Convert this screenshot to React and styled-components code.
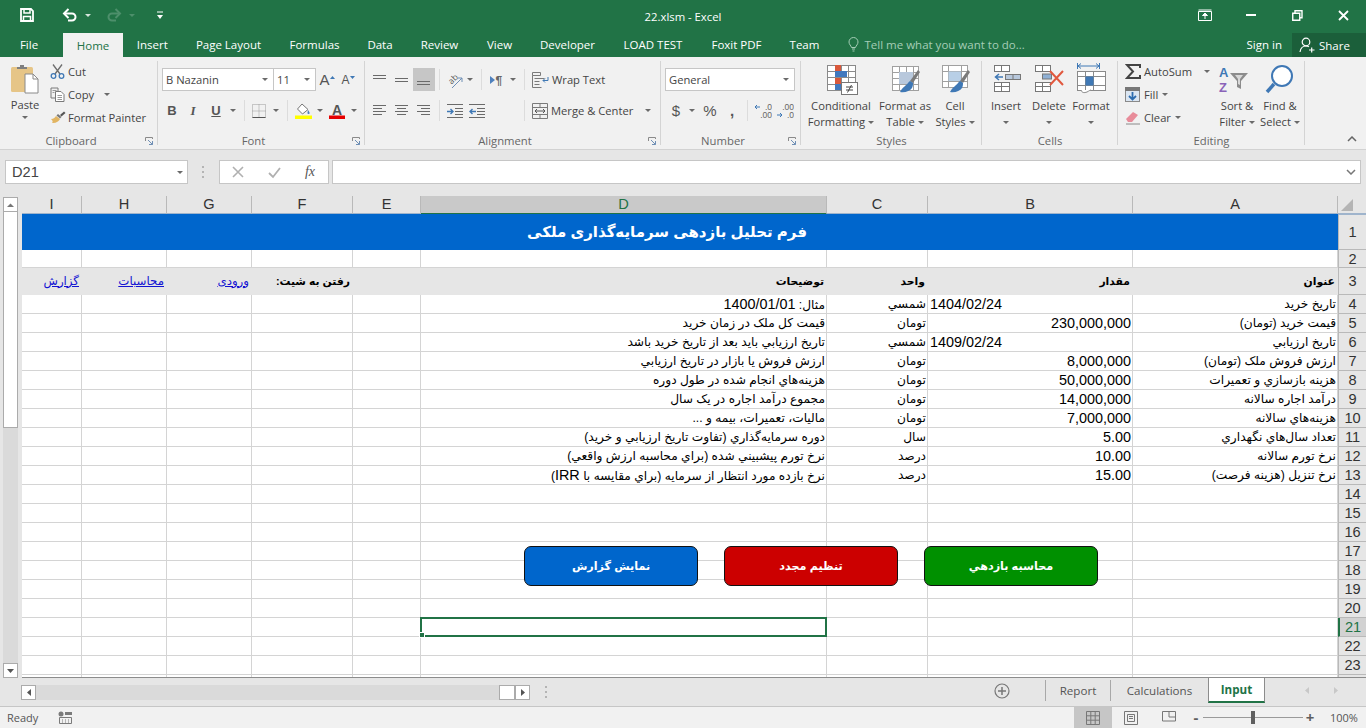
import React from "react";
import styled, { createGlobalStyle } from "styled-components";

const UI_FONT = `"Open Sans", "Noto Sans", sans-serif`;
const CELL_FONT = `"Liberation Sans", "DejaVu Sans", sans-serif`;
const GREEN = "#217346";

const GlobalStyle = createGlobalStyle`
  html, body {
    margin: 0;
    padding: 0;
    overflow: hidden;
    background: #e6e6e6;
    font-family: ${UI_FONT};
  }
`;

const Window = styled.div`
  width: 1366px;
  height: 728px;
  display: flex;
  flex-direction: column;
  overflow: hidden;
  background: #e6e6e6;
`;

/* ---------- title bar ---------- */
const TitleBar = styled.header`
  height: 30px;
  flex: none;
  background: ${GREEN};
  display: grid;
  grid-template-columns: 1fr auto 1fr;
  align-items: center;
`;

const Qat = styled.div`
  display: flex;
  align-items: center;
  padding-left: 17px;
`;

const QatItem = styled.span`
  width: ${(p) => p.$w}px;
  margin-left: ${(p) => p.$ml || 0}px;
  height: 30px;
  display: flex;
  align-items: center;
  justify-content: center;
`;

const TitleText = styled.div`
  color: #fff;
  font-size: 11.3px;
  padding-top: 2px;
  white-space: nowrap;
`;

const WinControls = styled.div`
  display: flex;
  justify-content: flex-end;
`;

const WinButton = styled.span`
  width: 46px;
  height: 30px;
  display: flex;
  align-items: center;
  justify-content: center;
`;

/* ---------- tabs ---------- */
const TabRow = styled.nav`
  height: 27px;
  flex: none;
  background: ${GREEN};
  display: flex;
  align-items: flex-end;
  font-size: 11.5px;
`;

const Tab = styled.span`
  width: ${(p) => p.$w}px;
  margin-right: ${(p) => p.$mr || 0}px;
  height: ${(p) => (p.$active ? 24 : 25)}px;
  display: flex;
  align-items: center;
  justify-content: center;
  box-sizing: border-box;
  color: ${(p) => (p.$active ? GREEN : "#fff")};
  background: ${(p) => (p.$active ? "#f1f1f1" : "transparent")};
  white-space: nowrap;
`;

const TellMe = styled.span`
  height: 25px;
  display: flex;
  align-items: center;
  gap: 6px;
  margin-left: 14px;
  color: #a5cdb6;
  white-space: nowrap;
`;

const SignIn = styled.span`
  height: 25px;
  margin-left: auto;
  display: flex;
  align-items: center;
  color: #fff;
  padding-right: 10px;
`;

const ShareButton = styled.span`
  width: 74px;
  height: 24px;
  background: #1b5f3a;
  color: #fff;
  display: flex;
  align-items: center;
  gap: 4px;
  padding-left: 7px;
  box-sizing: border-box;
`;

/* ---------- ribbon ---------- */
const Ribbon = styled.section`
  height: 93px;
  flex: none;
  box-sizing: border-box;
  background: #f1f1f1;
  border-bottom: 1px solid #d2d2d2;
  padding-top: 3px;
  display: flex;
  color: #444;
  font-size: 11.2px;
  line-height: 16px;
  white-space: nowrap;
`;

const Group = styled.div`
  width: ${(p) => p.$w}px;
  flex: none;
  position: relative;
  display: flex;
  flex-direction: column;
  &::after {
    content: "";
    position: absolute;
    right: 0;
    top: 1px;
    bottom: 4px;
    width: 1px;
    background: #d4d4d4;
  }
`;

const GroupBody = styled.div`
  height: 73px;
  flex: none;
  display: flex;
  padding-left: ${(p) => p.$pl || 0}px;
`;

const GroupLabel = styled.div`
  height: 17px;
  flex: none;
  text-align: center;
  color: #666;
  font-size: 11.3px;
  padding-right: ${(p) => (p.$launcher ? 16 : 0)}px;
  position: relative;
`;

const Launcher = styled.svg`
  position: absolute;
  right: 5px;
  top: 4px;
`;

const Collapse = styled.span`
  margin-left: auto;
  align-self: flex-end;
  padding: 0 9px 7px 0;
  display: flex;
`;

const PasteButton = styled.div`
  width: 34px;
  display: flex;
  flex-direction: column;
  align-items: center;
  padding-top: 4px;
  gap: 3px;
`;

const SmallColumn = styled.div`
  width: ${(p) => (p.$w ? `${p.$w}px` : "auto")};
  margin-left: ${(p) => p.$ml || 0}px;
  display: flex;
  flex-direction: column;
`;

const SmallButton = styled.div`
  height: 23px;
  display: flex;
  align-items: center;
  gap: ${(p) => p.$gap || 3}px;
`;

const StackedRows = styled.div`
  display: flex;
  flex-direction: column;
  gap: 8px;
  padding-top: 8px;
`;

const ToolRow = styled.div`
  height: 23px;
  display: flex;
  align-items: center;
`;

const ToolButton = styled.span`
  width: ${(p) => p.$w}px;
  height: 23px;
  flex: none;
  display: flex;
  align-items: center;
  justify-content: center;
  background: ${(p) => (p.$pressed ? "#c6c6c6" : "transparent")};
`;

const ToolSep = styled.span`
  width: ${(p) => p.$w}px;
  height: 21px;
  flex: none;
  display: flex;
  justify-content: center;
  &::before {
    content: "";
    width: 1px;
    background: #dcdcdc;
  }
`;

const WideButton = styled.span`
  display: flex;
  align-items: center;
  gap: 3px;
  padding-left: 5px;
`;

const Caret = styled.span`
  width: 0;
  height: 0;
  flex: none;
  margin-left: ${(p) => p.$ml || 0}px;
  border-left: 3px solid transparent;
  border-right: 3px solid transparent;
  border-top: 3px solid ${(p) => p.$color || "#6a6a6a"};
`;

const SelectBox = styled.div`
  width: ${(p) => p.$w}px;
  height: 23px;
  flex: none;
  box-sizing: border-box;
  background: #fff;
  border: 1px solid #c6c6c6;
  margin-left: ${(p) => p.$ml || 0}px;
  display: flex;
  align-items: center;
  justify-content: space-between;
  padding: 0 5px 0 3px;
`;

const Glyph = styled.span`
  font-family: ${(p) => p.$font || CELL_FONT};
  font-size: ${(p) => p.$size || 13}px;
  font-weight: ${(p) => p.$weight || 400};
  font-style: ${(p) => (p.$italic ? "italic" : "normal")};
  text-decoration: ${(p) => (p.$under ? "underline" : "none")};
  color: ${(p) => p.$color || "#555"};
`;

const BigButton = styled.div`
  width: ${(p) => p.$w}px;
  flex: none;
  display: flex;
  flex-direction: column;
  align-items: center;
`;

const BigIcon = styled.div`
  height: 38px;
  display: flex;
  justify-content: center;
`;

const BigLine = styled.div`
  height: 16px;
  display: flex;
  align-items: center;
  gap: 3px;
`;

/* ---------- formula bar ---------- */
const FormulaBar = styled.div`
  height: 46px;
  flex: none;
  box-sizing: border-box;
  padding: 10px 5px 0;
  display: flex;
  align-items: flex-start;
  background: #e6e6e6;
`;

const NameBox = styled.div`
  width: 183px;
  height: 24px;
  box-sizing: border-box;
  background: #fff;
  border: 1px solid #c6c6c6;
  display: flex;
  align-items: center;
  justify-content: space-between;
  padding: 0 4px 0 6px;
  font-family: ${CELL_FONT};
  font-size: 14.6px;
  color: #444;
`;

const GripDots = styled.svg`
  margin: ${(p) => p.$margin};
  flex: none;
`;

const FxBox = styled.div`
  width: 110px;
  height: 24px;
  box-sizing: border-box;
  background: #fff;
  border: 1px solid #c6c6c6;
  display: flex;
  align-items: center;
  margin-right: 3px;
`;

const FxSlot = styled.span`
  width: 36px;
  display: flex;
  justify-content: center;
`;

const FormulaInput = styled.div`
  flex: 1;
  height: 24px;
  box-sizing: border-box;
  background: #fff;
  border: 1px solid #c6c6c6;
  display: flex;
  align-items: center;
  justify-content: flex-end;
  padding-right: 4px;
`;

/* ---------- sheet ---------- */
const SheetArea = styled.main`
  height: 482px;
  flex: none;
  display: flex;
  background: #e6e6e6;
`;

const VScroll = styled.div`
  width: 22px;
  flex: none;
  box-sizing: border-box;
  padding: 1px 0 0 3px;
  display: flex;
  flex-direction: column;
  height: 482px;
`;

const VTrack = styled.div`
  width: 15px;
  flex: 1;
  background: #dadada;
  display: flex;
  flex-direction: column;
`;

const VThumb = styled.div`
  height: 216px;
  background: #fff;
  border: 1px solid #ababab;
  border-top: none;
  box-sizing: border-box;
`;

const ScrollBtn = styled.span`
  width: ${(p) => p.$w || 15}px;
  height: 15px;
  flex: none;
  box-sizing: border-box;
  background: #fff;
  border: 1px solid #ababab;
  display: flex;
  align-items: center;
  justify-content: center;
  margin-left: ${(p) => p.$ml || 0}px;
`;

const SheetGrid = styled.div`
  flex: 1;
  position: relative;
  overflow: hidden;
  box-sizing: border-box;
  border-bottom: 1px solid #8c8c8c;
`;

const Row = styled.div`
  display: grid;
  grid-template-columns: 60px 85px 85px 101px 68px 406px 101px 205px 205px 28px;
  height: ${(p) => p.$h}px;
`;

const ColHead = styled.div`
  box-sizing: border-box;
  background: ${(p) => (p.$active ? "#c9c9c9" : "#e6e6e6")};
  color: ${(p) => (p.$active ? GREEN : "#333")};
  border-right: 1px solid #b9b9b9;
  border-bottom: 2px solid ${(p) => (p.$active ? GREEN : "#9fb4cc")};
  font-family: ${CELL_FONT};
  font-size: 14.6px;
  text-align: center;
  line-height: 17px;
`;

const CornerHead = styled.div`
  background: #e6e6e6;
  position: relative;
  box-sizing: border-box;
  border-bottom: 2px solid #9fb4cc;
  display: flex;
  padding: 3px 0 0 3px;
`;

const Cell = styled.div`
  box-sizing: border-box;
  position: relative;
  background: ${(p) => (p.$head ? "#e6e6e6" : "#fff")};
  border-right: ${(p) => (p.$head ? "none" : "1px solid #d4d4d4")};
  border-bottom: ${(p) => (p.$head ? "none" : "1px solid #d4d4d4")};
  display: flex;
  align-items: center;
  justify-content: ${(p) => (p.$start ? "flex-start" : "flex-end")};
  padding: 0 ${(p) => (p.$head ? 3 : 1)}px 0 2px;
  font-family: ${CELL_FONT};
  font-size: ${(p) => (p.$bold ? 10.8 : 12.2)}px;
  font-weight: ${(p) => (p.$bold ? 700 : 400)};
  color: #000;
  white-space: nowrap;
  overflow: visible;
`;

const CellText = styled.span`
  display: block;
`;

const Numeric = styled.span`
  font-family: ${CELL_FONT};
  font-size: 14.4px;
`;

const Selection = styled.span`
  position: absolute;
  left: -1px;
  top: -1px;
  right: -1px;
  bottom: -1px;
  border: 2px solid ${GREEN};
  pointer-events: none;
  z-index: 3;
  &::after {
    content: "";
    position: absolute;
    left: -3px;
    bottom: -3px;
    width: 6px;
    height: 6px;
    background: ${GREEN};
    border: 1px solid #fff;
    box-sizing: border-box;
  }
`;

const SheetLink = styled.a`
  color: #1414d2;
  text-decoration: underline;
  font-size: 11.8px;
  margin-bottom: 2px;
`;

const TitleRow = styled.div`
  height: 36px;
  display: grid;
  grid-template-columns: 1fr 28px;
`;

const TitleCell = styled.div`
  background: #0066cc;
  color: #fff;
  font-family: ${CELL_FONT};
  font-size: 15px;
  font-weight: 700;
  display: flex;
  align-items: center;
  justify-content: center;
  padding-right: 26px;
`;

const RowHead = styled.div`
  box-sizing: border-box;
  background: ${(p) => (p.$active ? "#d2d2d2" : "#e6e6e6")};
  color: ${(p) => (p.$active ? GREEN : "#333")};
  border-left: ${(p) => (p.$active ? `2px solid ${GREEN}` : "1px solid #b9b9b9")};
  border-bottom: 1px solid #b9b9b9;
  font-family: ${CELL_FONT};
  font-size: 14.6px;
  display: flex;
  align-items: center;
  justify-content: center;
`;

const ActionStrip = styled.div`
  position: absolute;
  left: 502px;
  top: 350px;
  display: flex;
  gap: 26px;
  z-index: 2;
`;

const ActionButton = styled.button`
  width: 174px;
  height: 40px;
  border: 1px solid #111;
  border-radius: 7px;
  background: ${(p) => p.$bg};
  color: #fff;
  font-family: ${CELL_FONT};
  font-size: 11.2px;
  font-weight: 700;
  padding: 0;
`;

/* ---------- sheet tabs ---------- */
const SheetBar = styled.div`
  height: 28px;
  flex: none;
  display: flex;
  align-items: flex-start;
  padding-left: 21px;
  background: #e6e6e6;
  font-size: 11.6px;
  color: #555;
`;

const HScroll = styled.div`
  width: 509px;
  height: 15px;
  margin-top: 7px;
  display: flex;
  flex: none;
  background: #dadada;
`;

const HThumb = styled.span`
  width: 16px;
  height: 15px;
  box-sizing: border-box;
  background: #fff;
  border: 1px solid #ababab;
  margin-left: auto;
`;

const SheetTabs = styled.div`
  margin-left: auto;
  height: 25px;
  display: flex;
  align-items: center;
`;

const AddSpacer = styled.span`
  width: 35px;
`;

const SheetTab = styled.span`
  box-sizing: border-box;
  width: ${(p) => p.$w}px;
  display: flex;
  align-items: center;
  justify-content: center;
  background: ${(p) => (p.$active ? "#fff" : "transparent")};
  color: ${(p) => (p.$active ? GREEN : "#555")};
  font-weight: ${(p) => (p.$active ? 700 : 400)};
  border-bottom: ${(p) => (p.$active ? `2px solid ${GREEN}` : "none")};
  border-left: ${(p) => (p.$active ? "1px solid #8c8c8c" : "none")};
  border-right: ${(p) => (p.$active ? "1px solid #8c8c8c" : "none")};
  margin-top: ${(p) => (p.$active ? -1 : 0)}px;
  height: ${(p) => (p.$active ? 26 : 25)}px;
`;

const TabDivider = styled.span`
  width: 1px;
  height: 21px;
  background: #a8a8a8;
`;

const TabNav = styled.div`
  width: 101px;
  height: 25px;
  display: flex;
  align-items: center;
  padding-left: 40px;
  gap: 25px;
  box-sizing: border-box;
`;

/* ---------- status bar ---------- */
const StatusBar = styled.footer`
  height: 22px;
  flex: none;
  box-sizing: border-box;
  background: #f1f1f1;
  border-top: 1px solid #c6c6c6;
  display: flex;
  align-items: center;
  font-size: 11px;
  color: #555;
  padding-left: 7px;
`;

const MacroSlot = styled.span`
  margin-left: 20px;
  display: flex;
`;

const ViewGroup = styled.div`
  margin-left: auto;
  display: flex;
  align-items: center;
  height: 21px;
  flex: none;
`;

const ViewButton = styled.span`
  width: 38px;
  height: 21px;
  flex: none;
  display: flex;
  align-items: center;
  justify-content: center;
  background: ${(p) => (p.$active ? "#c6c6c6" : "transparent")};
`;

const ZoomSlider = styled.span`
  width: 100px;
  height: 1px;
  flex: none;
  background: #9a9a9a;
  margin: 0 3px;
  position: relative;
  &::after {
    content: "";
    position: absolute;
    left: 48px;
    top: -6px;
    width: 4px;
    height: 13px;
    background: #5f5f5f;
  }
`;

const ZoomValue = styled.span`
  width: 36px;
  flex: none;
  padding-left: 16px;
`;

const ZoomSign = styled.span`
  width: 8px;
  flex: none;
  margin-left: ${(p) => p.$ml || 0}px;
  display: flex;
  justify-content: center;
  font-size: 15px;
  font-weight: 700;
  line-height: 15px;
  color: #5f5f5f;
`;

/* ---------- icons ---------- */
const Svg = ({ w, h = w, children, ...rest }) => (
  <svg width={w} height={h} viewBox={`0 0 ${w} ${h}`} fill="none" {...rest} style={{ display: "block", flex: "none" }}>
    {children}
  </svg>
);

const SaveIcon = () => (
  <Svg w={14}>
    <path d="M1 1h10l2 2v10H1z" stroke="#fff" strokeWidth="1.8" />
    <path d="M4 1.5v3.5h6V1.5M3.5 13V8.5h7V13" stroke="#fff" strokeWidth="1.5" />
  </Svg>
);

const UndoIcon = ({ color = "#fff", flip }) => (
  <Svg w={16} h={14}>
    <g transform={flip ? "translate(16 0) scale(-1 1)" : undefined}>
      <path d="M2.5 5.5h7.5a3.5 3.5 0 0 1 0 7H6" stroke={color} strokeWidth="2" />
      <path d="M6.5 1 2 5.5 6.5 10" stroke={color} strokeWidth="2" />
    </g>
  </Svg>
);

const CustomizeIcon = () => (
  <Svg w={8} h={9}>
    <path d="M1 1h6" stroke="#fff" />
    <path d="M1 4h6L4 8z" fill="#fff" />
  </Svg>
);

const RibbonDisplayIcon = () => (
  <Svg w={14} h={12}>
    <path d="M.5 2.5h13v9H.5zM.5 1h13" stroke="#fff" />
    <path d="M7 10V5M4.5 6.5 7 4l2.5 2.5z" stroke="#fff" fill="#fff" />
  </Svg>
);

const RestoreIcon = () => (
  <Svg w={11}>
    <path d="M.75 3.25h7v7h-7zM3 3V.75h7v7H8" stroke="#fff" strokeWidth="1.4" />
  </Svg>
);

const BulbIcon = () => (
  <Svg w={11} h={15}>
    <path d="M3.5 10.5C3 8.5 1 7.500 1 5a4.500 4.500 0 0 1 9 0c0 2.500-2 3.500-2.500 5.500z" stroke="#a5cdb6" />
    <path d="M4 12h3M4.500 14h2" stroke="#a5cdb6" />
  </Svg>
);

const PersonIcon = () => (
  <Svg w={16}>
    <circle cx="7" cy="5" r="3.8" stroke="#fff" strokeWidth="1.2" />
    <path d="M1 15c.5-3.500 2.500-6 6-6 1 0 2 .3 3 .8M10 13h5.500M12.700 10.500v5" stroke="#fff" strokeWidth="1.2" />
  </Svg>
);

const PasteIcon = () => (
  <Svg w={30} h={30}>
    <rect x="1" y="3" width="22" height="25" rx="1.500" fill="#e6c587" />
    <path d="M7 5V3h3V1h4v2h3v2z" fill="#7f7f7f" />
    <path d="M15 10h8l5 5v14H15z" fill="#fff" stroke="#8a8a8a" />
    <path d="M23 10v5h5" stroke="#8a8a8a" />
  </Svg>
);

const CutIcon = () => (
  <Svg w={15}>
    <path d="M3 .5 10 10M12 .5 5 10" stroke="#6e6e6e" strokeWidth="1.300" />
    <circle cx="3.500" cy="12" r="2.300" stroke="#3f78b5" strokeWidth="1.300" />
    <circle cx="11.500" cy="12" r="2.300" stroke="#3f78b5" strokeWidth="1.300" />
  </Svg>
);

const CopyIcon = () => (
  <Svg w={15}>
    <path d="M1 1h7v3M1 1v10h4" stroke="#7a7a7a" />
    <path d="M5.500 4.500H11l3 3v7H5.500z" fill="#fff" stroke="#7a7a7a" />
    <path d="M7.500 8.500h4.500M7.500 10.500h4.500M7.500 12.500h4.500M2.500 3.500h4M2.500 5.500h2" stroke="#9a9a9a" />
  </Svg>
);

const PainterIcon = () => (
  <Svg w={16} h={13}>
    <path d="M1 8c3 0 4-2 5-3l4 3c-1 2-4 4.500-8 4 1-1 1-2-1-4z" fill="#e2b562" />
    <path d="m6.500 4.500 3.500 3 1.500-1.500-3.500-3z" fill="#777" />
    <path d="M10 4 14 .5l1.500 1.500-4 3.500z" fill="#555" />
  </Svg>
);

const Launch = () => (
  <Launcher width="8" height="8" viewBox="0 0 8 8" fill="none">
    <path d="M.5 4V.5H7.500V2" stroke="#8a8a8a" />
    <path d="M3 3 7.500 7.500M4 7.500h3.500V4" stroke="#6f8fb5" />
  </Launcher>
);

const BordersIcon = () => (
  <Svg w={14}>
    <path d="M.5.5h13v13H.5zM7 .5v13M.5 7h13" stroke="#9a9a9a" strokeDasharray="1 1" />
    <path d="M.5 13.500h13" stroke="#555" />
  </Svg>
);

const FillIcon = () => (
  <Svg w={17} h={16}>
    <path d="M7 1 2.500 6l5 5L13 6.500z" fill="#fff" stroke="#777" />
    <path d="M13 7c1 1.500 2 2.500 1.500 3.500s-2.500.5-2-1z" fill="#4f81bd" />
    <rect x="0" y="12.500" width="17" height="3.500" fill="#ffff00" />
  </Svg>
);

const FontColorIcon = () => (
  <Svg w={16}>
    <text x="8" y="11.500" textAnchor="middle" fontFamily={CELL_FONT} fontWeight="700" fontSize="14" fill="#555">A</text>
    <rect x="0" y="12.500" width="16" height="3.500" fill="#e60000" />
  </Svg>
);

const Lines = ({ rows, w = 14, h = 14, color = "#6a6a6a" }) => (
  <Svg w={w} h={h}>
    {rows.map(([a, b, y], i) => (
      <path key={i} d={`M${a} ${y + 0.5}H${b}`} stroke={color} />
    ))}
  </Svg>
);

const OrientationIcon = () => (
  <Svg w={22} h={22}>
    <text x="9" y="13" textAnchor="middle" transform="rotate(-45 9 10)" fontFamily={UI_FONT} fontSize="8.500" fill="#555">ab</text>
    <path d="M8 19 18 9" stroke="#6f8fb5" />
    <path d="M14 9h4v4" stroke="#6f8fb5" />
  </Svg>
);

const RtlIcon = () => (
  <Svg w={15} h={12}>
    <path d="M0 2l5 4-5 4z" fill="#4f81bd" />
    <text x="5.500" y="10.500" fontFamily={CELL_FONT} fontSize="12" fontWeight="700" fill="#666">¶</text>
  </Svg>
);

const IndentIcon = ({ out }) => (
  <Svg w={16} h={14}>
    <path d="M0 .5h16M8 4.500h8M8 7.500h8M8 10.500h8M0 13.500h16" stroke="#6a6a6a" />
    <path d={out ? "M7 7.500H1M3.500 5 1 7.500 3.500 10" : "M0 7.500h6M3.500 5 6 7.500 3.500 10"} stroke="#3f78b5" strokeWidth="1.400" />
  </Svg>
);

const WrapIcon = () => (
  <Svg w={17} h={16}>
    <path d="M.5.5h8v3h-8zM.5 3.500v12h9" stroke="#7a7a7a" />
    <path d="M2.500 6.500h10M2.500 9.500h5M2.500 12.500h5" stroke="#7a7a7a" />
    <path d="M16 5v3.500h-5M13 6.500 11 8.500l2 2" stroke="#3f78b5" />
  </Svg>
);

const MergeIcon = () => (
  <Svg w={16}>
    <path d="M.5.5h15v15H.5zM.5 4.500h15M.5 11.500h15M8 .5v4M8 11.500v4" stroke="#7a7a7a" />
    <path d="M3 8h10M5 6 3 8l2 2M11 6l2 2-2 2" stroke="#555" />
  </Svg>
);

const DecimalIcon = ({ more }) => (
  <Svg w={18} h={16}>
    <text x="18" y="7" textAnchor="end" fontFamily={CELL_FONT} fontSize="8.500" fill="#666">{more ? ".00" : ".0"}</text>
    <text x="18" y="15" textAnchor="end" fontFamily={CELL_FONT} fontSize="8.500" fill="#666">{more ? ".0" : ".00"}</text>
    {more
      ? <path d="M1 12h5M4 10l2 2-2 2" stroke="#3f78b5" />
      : <path d="M1 4h5M3 2l-2 2 2 2" stroke="#3f78b5" />}
  </Svg>
);

const Grid = ({ x, y, w, h, cols = [], rows = [], stroke = "#8a8a8a", fill = "#fff" }) => (
  <g stroke={stroke}>
    <rect x={x + 0.5} y={y + 0.5} width={w} height={h} fill={fill} />
    {cols.map((c) => <path key={`c${c}`} d={`M${x + c + 0.5} ${y}v${h}`} />)}
    {rows.map((r) => <path key={`r${r}`} d={`M${x} ${y + r + 0.5}h${w}`} />)}
  </g>
);

const Brush = ({ x = 0, y = 0 }) => (
  <g transform={`translate(${x} ${y})`}>
    <path d="M33 8 25 19l3 2 7-11z" fill="#7a7a7a" />
    <path d="M25 19c-2 1-2 3-4 4-2 2-4 3-6 7 5 1 10-1 12-4 1-2 1-4 1-5z" fill="#3f78b5" />
  </g>
);

const ConditionalIcon = () => (
  <Svg w={40} h={38}>
    <Grid x={6} y={5} w={28} h={25} cols={[8, 14, 21]} rows={[6, 12, 19]} />
    <rect x="14" y="5" width="6" height="6" fill="#d9583b" />
    <rect x="14" y="11" width="12" height="6" fill="#4178be" />
    <rect x="14" y="18" width="6" height="6" fill="#d9583b" />
    <rect x="14" y="24" width="6" height="6" fill="#4178be" />
    <rect x="20.500" y="22.500" width="16" height="12" fill="#fff" stroke="#777" />
    <path d="M25 27h7M25 30h7M30.500 25l-4 7.500" stroke="#444" />
  </Svg>
);

const FormatTableIcon = () => (
  <Svg w={40} h={38}>
    <Grid x={7} y={6} w={26} h={24} cols={[7, 14, 21]} rows={[6, 12, 18]} stroke="#a0a0a0" />
    <rect x="14" y="12" width="14" height="12" fill="#b8c8dc" />
    <Brush x={0} y={2} />
  </Svg>
);

const CellStylesIcon = () => (
  <Svg w={40} h={38}>
    <Grid x={7} y={5} w={25} h={22} cols={[6, 19]} rows={[6, 16]} stroke="#a0a0a0" />
    <rect x="13.500" y="11.500" width="12.500" height="9.500" fill="#b8cfe6" />
    <Brush x={0} y={2} />
  </Svg>
);

const InsertIcon = () => (
  <Svg w={40} h={38}>
    <Grid x={8} y={5} w={15} h={6} cols={[7]} stroke="#777" />
    <Grid x={8} y={22} w={15} h={9} cols={[7]} rows={[4]} stroke="#777" />
    <rect x="19.500" y="14.500" width="15" height="5" fill="#b8c8dc" stroke="#777" />
    <path d="M27 14.500v5" stroke="#777" />
    <path d="M17 17H10M13 14l-3.500 3 3.500 3" stroke="#3f78b5" strokeWidth="1.500" />
  </Svg>
);

const DeleteIcon = () => (
  <Svg w={40} h={38}>
    <Grid x={6} y={5} w={15} h={6} cols={[7]} stroke="#777" />
    <Grid x={6} y={22} w={15} h={9} cols={[7]} rows={[4]} stroke="#777" />
    <rect x="13.500" y="14" width="9" height="5" fill="#8fb0d5" stroke="#777" />
    <path d="M21 11 34 25M34 11 21 25" stroke="#e1583e" strokeWidth="2" />
  </Svg>
);

const FormatIcon = () => (
  <Svg w={40} h={38}>
    <path d="M6.500 3v6M28.500 3v6M7 6h21M10 3.500 7 6l3 2.500M25 3.500 28 6l-3 2.500" stroke="#3f78b5" />
    <Grid x={6} y={11} w={28} h={19} cols={[8, 16]} rows={[5, 14]} stroke="#8a8a8a" />
    <rect x="14.500" y="16.500" width="8" height="9" fill="#3f78b5" />
    <path d="M10 30c1 3 3 3 6 2 2-1 3-2 4-2" stroke="#8a8a8a" fill="#fff" />
  </Svg>
);

const SumIcon = () => (
  <Svg w={16} h={15}>
    <path d="M15 4V1H2l6 6.500L2 14h13v-3" stroke="#444" strokeWidth="2" />
  </Svg>
);

const FillDownIcon = () => (
  <Svg w={15}>
    <rect x=".5" y=".5" width="14" height="14" fill="#dbe6f2" stroke="#8a8a8a" />
    <rect x="0" y="0" width="15" height="4" fill="#777" />
    <path d="M7.500 5v7M4 9l3.500 3.500L11 9" stroke="#2d6cae" strokeWidth="1.800" />
  </Svg>
);

const ClearIcon = () => (
  <Svg w={15} h={14}>
    <path d="M1 8 8 1l5 3-6 7H3z" fill="#e88c9a" />
    <path d="M1 13h14" stroke="#8a8a8a" />
  </Svg>
);

const SortIcon = () => (
  <Svg w={40} h={38}>
    <text x="2" y="17" fontFamily={CELL_FONT} fontSize="13" fontWeight="700" fill="#3f78b5">A</text>
    <text x="2" y="32" fontFamily={CELL_FONT} fontSize="13" fontWeight="700" fill="#8a63b8">Z</text>
    <path d="M13 13h18l-7 8v8l-4-2v-6z" fill="#8c8c8c" />
    <path d="M18 15h8l-3 4v6l-2-1v-5z" fill="#d8d8d8" />
  </Svg>
);

const FindIcon = () => (
  <Svg w={40} h={38}>
    <circle cx="22" cy="16" r="10" stroke="#3f78b5" strokeWidth="2" fill="#fff" />
    <path d="M14 24 7 32" stroke="#3f78b5" strokeWidth="3.500" />
  </Svg>
);

const Chevron = ({ up, color = "#666" }) => (
  <Svg w={10} h={6}>
    <path d={up ? "M1 5l4-4 4 4" : "M1 1l4 4 4-4"} stroke={color} strokeWidth="1.500" />
  </Svg>
);

const Dots = ({ margin, h = 16 }) => (
  <GripDots $margin={margin} width="2" height={h} viewBox={`0 0 2 ${h}`}>
    <rect y={h / 2 - 6} width="2" height="2" fill="#b4b4b4" />
    <rect y={h / 2 - 1} width="2" height="2" fill="#b4b4b4" />
    <rect y={h / 2 + 4} width="2" height="2" fill="#b4b4b4" />
  </GripDots>
);

const Arrow = ({ dir, color = "#555" }) => {
  const d = { up: "M0 4l3.500-3.500L7 4z", down: "M0 0h7L3.500 4z", left: "M4 0v7L0 3.500z", right: "M0 0v7l4-3.500z" }[dir];
  const vert = dir === "up" || dir === "down";
  return (
    <Svg w={vert ? 7 : 4} h={vert ? 4 : 7}>
      <path d={d} fill={color} />
    </Svg>
  );
};

const AddSheetIcon = () => (
  <Svg w={16}>
    <circle cx="8" cy="8" r="7" stroke="#777" strokeWidth="1.200" />
    <path d="M8 4v8M4 8h8" stroke="#777" strokeWidth="1.500" />
  </Svg>
);

const MacroIcon = () => (
  <Svg w={14} h={13}>
    <circle cx="3" cy="3" r="2.500" fill="#7a7a7a" />
    <path d="M7 1h7v3H7z" fill="#7a7a7a" />
    <path d="M1.500 6.500h12v6h-12zM4 9h1M7 9h1M10 9h1M4 11h1M7 11h1M10 11h1" stroke="#7a7a7a" />
  </Svg>
);

const NormalViewIcon = () => (
  <Svg w={14}>
    <path d="M.5.5h13v13H.5zM4.800.5v13M9.200.5v13M.5 4.800h13M.5 9.200h13" stroke="#777" />
  </Svg>
);

const PageViewIcon = () => (
  <Svg w={14}>
    <path d="M.5.5h13v13H.5zM3.500 3.500h7v7h-7zM5 5.500h4M5 7.500h4" stroke="#777" />
  </Svg>
);

const BreakViewIcon = () => (
  <Svg w={14}>
    <path d="M.5 10V.5h13V10M.5 10h13M7 .5V6H13.500" stroke="#777" />
  </Svg>
);

/* ---------- data ---------- */
const TABS = [
  ["Insert", 58.5], ["Page Layout", 94], ["Formulas", 78], ["Data", 53], ["Review", 66],
  ["View", 54], ["Developer", 82], ["LOAD TEST", 89], ["Foxit PDF", 78], ["Team", 58],
];

const COLUMNS = ["I", "H", "G", "F", "E", "D", "C", "B", "A"];

const ROWS = [
  { n: 4, a: "تاریخ خرید", date: "1404/02/24", c: "شمسي", d: <>مثال: <Numeric>1400/01/01</Numeric></> },
  { n: 5, a: "قیمت خرید (تومان)", b: "230,000,000", c: "تومان", d: "قیمت کل ملک در زمان خرید" },
  { n: 6, a: "تاریخ ارزیابي", date: "1409/02/24", c: "شمسي", d: "تاریخ ارزیابي باید بعد از تاریخ خرید باشد" },
  { n: 7, a: "ارزش فروش ملک (تومان)", b: "8,000,000", c: "تومان", d: "ارزش فروش یا بازار در تاریخ ارزیابي" },
  { n: 8, a: "هزینه بازسازي و تعمیرات", b: "50,000,000", c: "تومان", d: "هزینه‌هاي انجام شده در طول دوره" },
  { n: 9, a: "درآمد اجاره سالانه", b: "14,000,000", c: "تومان", d: "مجموع درآمد اجاره در یک سال" },
  { n: 10, a: "هزینه‌هاي سالانه", b: "7,000,000", c: "تومان", d: "مالیات، تعمیرات، بیمه و ..." },
  { n: 11, a: "تعداد سال‌هاي نگهداري", b: "5.00", c: "سال", d: "دوره سرمایه‌گذاري (تفاوت تاریخ ارزیابي و خرید)" },
  { n: 12, a: "نرخ تورم سالانه", b: "10.00", c: "درصد", d: "نرخ تورم پیشبیني شده (براي محاسبه ارزش واقعي)" },
  { n: 13, a: "نرخ تنزیل (هزینه فرصت)", b: "15.00", c: "درصد", d: <>نرخ بازده مورد انتظار از سرمایه (براي مقایسه با <Numeric>IRR</Numeric>)</> },
];

const BlankRow = ({ n, h = 19, selected }) => (
  <Row $h={h}>
    {COLUMNS.map((col) => (
      <Cell key={col}>{selected && col === "D" && <Selection />}</Cell>
    ))}
    <RowHead $active={selected}>{n}</RowHead>
  </Row>
);

const DataRow = ({ row }) => (
  <Row $h={19}>
    <Cell /><Cell /><Cell /><Cell /><Cell />
    <Cell><CellText dir="rtl">{row.d}</CellText></Cell>
    <Cell><CellText dir="rtl">{row.c}</CellText></Cell>
    <Cell $start={!!row.date}><Numeric>{row.date || row.b}</Numeric></Cell>
    <Cell><CellText dir="rtl">{row.a}</CellText></Cell>
    <RowHead>{row.n}</RowHead>
  </Row>
);

const AlignTop = [[0, 13, 2], [0, 13, 5]];
const AlignMid = [[0, 13, 5], [0, 13, 8]];
const AlignBot = [[0, 13, 8], [0, 13, 11]];
const AlignL = [[0, 13, 1], [0, 9, 4], [0, 13, 7], [0, 9, 10]];
const AlignC = [[0, 13, 1], [2, 11, 4], [0, 13, 7], [2, 11, 10]];
const AlignR = [[0, 13, 1], [4, 13, 4], [0, 13, 7], [4, 13, 10]];

export default function App() {
  return (
    <Window>
      <GlobalStyle />

      <TitleBar>
        <Qat>
          <QatItem $w={20}><SaveIcon /></QatItem>
          <QatItem $w={18} $ml={24}><UndoIcon /></QatItem>
          <QatItem $w={18}><Caret $color="#d5e5db" /></QatItem>
          <QatItem $w={18} $ml={8}><UndoIcon flip color="#4d8f6b" /></QatItem>
          <QatItem $w={18}><Caret $color="#4d8f6b" /></QatItem>
          <QatItem $w={18} $ml={10}><CustomizeIcon /></QatItem>
        </Qat>
        <TitleText>22.xlsm - Excel</TitleText>
        <WinControls>
          <WinButton><RibbonDisplayIcon /></WinButton>
          <WinButton><Svg w={10} h={2}><rect width="10" height="2" fill="#fff" /></Svg></WinButton>
          <WinButton><RestoreIcon /></WinButton>
          <WinButton><Svg w={11}><path d="M1 1l9 9M10 1l-9 9" stroke="#fff" strokeWidth="1.800" /></Svg></WinButton>
        </WinControls>
      </TitleBar>

      <TabRow>
        <Tab $w={58} $mr={5}>File</Tab>
        <Tab $w={60} $active>Home</Tab>
        {TABS.map(([label, w]) => <Tab key={label} $w={w}>{label}</Tab>)}
        <TellMe><BulbIcon />Tell me what you want to do...</TellMe>
        <SignIn>Sign in</SignIn>
        <ShareButton><PersonIcon />Share</ShareButton>
      </TabRow>

      <Ribbon>
        <Group $w={158}>
          <GroupBody $pl={8}>
            <PasteButton>
              <PasteIcon />
              <BigLine>Paste</BigLine>
              <Caret />
            </PasteButton>
            <SmallColumn $ml={8}>
              <SmallButton><CutIcon />Cut</SmallButton>
              <SmallButton><CopyIcon />Copy<Caret $ml={7} /></SmallButton>
              <SmallButton $gap={2}><PainterIcon />Format Painter</SmallButton>
            </SmallColumn>
          </GroupBody>
          <GroupLabel $launcher>Clipboard<Launch /></GroupLabel>
        </Group>

        <Group $w={207}>
          <GroupBody $pl={4}>
            <StackedRows>
              <ToolRow>
                <SelectBox $w={112}>B Nazanin<Caret /></SelectBox>
                <SelectBox $w={43} $ml={-1}>11<Caret /></SelectBox>
                <ToolButton $w={22}><Glyph $size={15}>A</Glyph><Svg w={5} h={10}><path d="M0 4l2.500-3L5 4z" fill="#3f78b5" /></Svg></ToolButton>
                <ToolButton $w={20}><Glyph $size={12}>A</Glyph><Svg w={5} h={10}><path d="M0 1h5L2.500 4z" fill="#3f78b5" /></Svg></ToolButton>
              </ToolRow>
              <ToolRow>
                <ToolButton $w={20}><Glyph $weight={700}>B</Glyph></ToolButton>
                <ToolButton $w={22}><Glyph $italic $weight={700} $font={`"Liberation Serif", serif`}>I</Glyph></ToolButton>
                <ToolButton $w={24}><Glyph $weight={700} $under>U</Glyph></ToolButton>
                <ToolButton $w={10}><Caret /></ToolButton>
                <ToolSep $w={12} />
                <ToolButton $w={18}><BordersIcon /></ToolButton>
                <ToolButton $w={16}><Caret /></ToolButton>
                <ToolSep $w={6} />
                <ToolButton $w={26}><FillIcon /></ToolButton>
                <ToolButton $w={8}><Caret /></ToolButton>
                <ToolButton $w={26}><FontColorIcon /></ToolButton>
                <ToolButton $w={8}><Caret /></ToolButton>
              </ToolRow>
            </StackedRows>
          </GroupBody>
          <GroupLabel $launcher>Font<Launch /></GroupLabel>
        </Group>

        <Group $w={296}>
          <GroupBody $pl={4}>
            <StackedRows>
              <ToolRow>
                <ToolButton $w={22}><Lines rows={AlignTop} /></ToolButton>
                <ToolButton $w={22}><Lines rows={AlignMid} /></ToolButton>
                <ToolButton $w={22} $pressed><Lines rows={AlignBot} /></ToolButton>
                <ToolSep $w={8} />
                <ToolButton $w={24}><OrientationIcon /></ToolButton>
                <ToolButton $w={6}><Caret /></ToolButton>
                <ToolSep $w={16} />
                <ToolButton $w={16}><RtlIcon /></ToolButton>
                <ToolButton $w={16}><Caret /></ToolButton>
                <ToolSep $w={6} />
                <WideButton><WrapIcon />Wrap Text</WideButton>
              </ToolRow>
              <ToolRow>
                <ToolButton $w={22}><Lines rows={AlignL} /></ToolButton>
                <ToolButton $w={22}><Lines rows={AlignC} /></ToolButton>
                <ToolButton $w={22}><Lines rows={AlignR} /></ToolButton>
                <ToolSep $w={8} />
                <ToolButton $w={23}><IndentIcon /></ToolButton>
                <ToolButton $w={22}><IndentIcon out /></ToolButton>
                <ToolButton $w={33} />
                <ToolSep $w={6} />
                <WideButton><MergeIcon />Merge &amp; Center<Caret $ml={9} /></WideButton>
              </ToolRow>
            </StackedRows>
          </GroupBody>
          <GroupLabel $launcher>Alignment<Launch /></GroupLabel>
        </Group>

        <Group $w={140}>
          <GroupBody $pl={4}>
            <StackedRows>
              <ToolRow>
                <SelectBox $w={130}>General<Caret /></SelectBox>
              </ToolRow>
              <ToolRow>
                <ToolButton $w={22}><Glyph $size={15}>$</Glyph></ToolButton>
                <ToolButton $w={10}><Caret /></ToolButton>
                <ToolButton $w={26}><Glyph $size={15}>%</Glyph></ToolButton>
                <ToolButton $w={18}><Glyph $size={15} $weight={700}>,</Glyph></ToolButton>
                <ToolSep $w={12} />
                <ToolButton $w={20}><DecimalIcon /></ToolButton>
                <ToolButton $w={24}><DecimalIcon more /></ToolButton>
              </ToolRow>
            </StackedRows>
          </GroupBody>
          <GroupLabel $launcher>Number<Launch /></GroupLabel>
        </Group>

        <Group $w={181}>
          <GroupBody $pl={6}>
            <BigButton $w={68}>
              <BigIcon><ConditionalIcon /></BigIcon>
              <BigLine>Conditional</BigLine>
              <BigLine>Formatting<Caret /></BigLine>
            </BigButton>
            <BigButton $w={60}>
              <BigIcon><FormatTableIcon /></BigIcon>
              <BigLine>Format as</BigLine>
              <BigLine>Table<Caret /></BigLine>
            </BigButton>
            <BigButton $w={40}>
              <BigIcon><CellStylesIcon /></BigIcon>
              <BigLine>Cell</BigLine>
              <BigLine>Styles<Caret /></BigLine>
            </BigButton>
          </GroupBody>
          <GroupLabel>Styles</GroupLabel>
        </Group>

        <Group $w={136}>
          <GroupBody $pl={3}>
            <BigButton $w={42}>
              <BigIcon><InsertIcon /></BigIcon>
              <BigLine>Insert</BigLine>
              <BigLine><Caret /></BigLine>
            </BigButton>
            <BigButton $w={44}>
              <BigIcon><DeleteIcon /></BigIcon>
              <BigLine>Delete</BigLine>
              <BigLine><Caret /></BigLine>
            </BigButton>
            <BigButton $w={40}>
              <BigIcon><FormatIcon /></BigIcon>
              <BigLine>Format</BigLine>
              <BigLine><Caret /></BigLine>
            </BigButton>
          </GroupBody>
          <GroupLabel>Cells</GroupLabel>
        </Group>

        <Group $w={187}>
          <GroupBody $pl={7}>
            <SmallColumn $w={90}>
              <SmallButton><SumIcon />AutoSum<Caret $ml={9} /></SmallButton>
              <SmallButton $gap={4}><FillDownIcon />Fill<Caret /></SmallButton>
              <SmallButton $gap={4}><ClearIcon />Clear<Caret /></SmallButton>
            </SmallColumn>
            <BigButton $w={44}>
              <BigIcon><SortIcon /></BigIcon>
              <BigLine>Sort &amp;</BigLine>
              <BigLine>Filter<Caret /></BigLine>
            </BigButton>
            <BigButton $w={42}>
              <BigIcon><FindIcon /></BigIcon>
              <BigLine>Find &amp;</BigLine>
              <BigLine>Select<Caret /></BigLine>
            </BigButton>
          </GroupBody>
          <GroupLabel>Editing</GroupLabel>
        </Group>

        <Collapse><Chevron up /></Collapse>
      </Ribbon>

      <FormulaBar>
        <NameBox>D21<Caret /></NameBox>
        <Dots margin="4px 15px 0 14px" />
        <FxBox>
          <FxSlot><Svg w={12}><path d="M1 1l10 10M11 1 1 11" stroke="#b0b0b0" strokeWidth="1.600" /></Svg></FxSlot>
          <FxSlot><Svg w={13}><path d="M1 7l4 4 7-9" stroke="#b0b0b0" strokeWidth="1.800" /></Svg></FxSlot>
          <FxSlot><Glyph $italic $size={14} $font={`"Liberation Serif", serif`} $color="#555">fx</Glyph></FxSlot>
        </FxBox>
        <FormulaInput><Chevron color="#777" /></FormulaInput>
      </FormulaBar>

      <SheetArea>
        <VScroll>
          <ScrollBtn><Arrow dir="up" color="#777" /></ScrollBtn>
          <VTrack><VThumb /></VTrack>
          <ScrollBtn><Arrow dir="down" /></ScrollBtn>
        </VScroll>

        <SheetGrid>
          <Row $h={18}>
            {COLUMNS.map((col) => <ColHead key={col} $active={col === "D"}>{col}</ColHead>)}
            <CornerHead><Svg w={12}><path d="M12 0v12H0z" fill="#b4b4b4" /></Svg></CornerHead>
          </Row>

          <TitleRow>
            <TitleCell dir="rtl">فرم تحلیل بازدهی سرمایه‌گذاری ملکی</TitleCell>
            <RowHead>1</RowHead>
          </TitleRow>

          <BlankRow n={2} h={18} />

          <Row $h={27}>
            <Cell $head><SheetLink dir="rtl">گزارش</SheetLink></Cell>
            <Cell $head><SheetLink dir="rtl">محاسبات</SheetLink></Cell>
            <Cell $head><SheetLink dir="rtl">ورودی</SheetLink></Cell>
            <Cell $head $bold><CellText dir="rtl">رفتن به شیت:</CellText></Cell>
            <Cell $head />
            <Cell $head $bold><CellText dir="rtl">توضیحات</CellText></Cell>
            <Cell $head $bold><CellText dir="rtl">واحد</CellText></Cell>
            <Cell $head $bold><CellText dir="rtl">مقدار</CellText></Cell>
            <Cell $head $bold><CellText dir="rtl">عنوان</CellText></Cell>
            <RowHead>3</RowHead>
          </Row>

          {ROWS.map((row) => <DataRow key={row.n} row={row} />)}
          {[14, 15, 16, 17, 18, 19, 20].map((n) => <BlankRow key={n} n={n} />)}
          <BlankRow n={21} selected />
          <BlankRow n={22} />
          <BlankRow n={23} />
          <BlankRow n="" />

          <ActionStrip>
            <ActionButton $bg="#0066cc" dir="rtl">نمایش گزارش</ActionButton>
            <ActionButton $bg="#cc0000" dir="rtl">تنظیم مجدد</ActionButton>
            <ActionButton $bg="#009000" dir="rtl">محاسبه بازدهي</ActionButton>
          </ActionStrip>
        </SheetGrid>
      </SheetArea>

      <SheetBar>
        <HScroll>
          <ScrollBtn><Arrow dir="left" /></ScrollBtn>
          <HThumb />
          <ScrollBtn><Arrow dir="right" /></ScrollBtn>
        </HScroll>
        <Dots margin="6px 0 0 15px" />
        <SheetTabs>
          <AddSheetIcon />
          <AddSpacer />
          <TabDivider />
          <SheetTab $w={64}>Report</SheetTab>
          <TabDivider />
          <SheetTab $w={97}>Calculations</SheetTab>
          <SheetTab $w={57} $active>Input</SheetTab>
          <TabNav>
            <Arrow dir="left" color="#c8c8c8" />
            <Arrow dir="right" color="#c8c8c8" />
          </TabNav>
        </SheetTabs>
      </SheetBar>

      <StatusBar>
        Ready
        <MacroSlot><MacroIcon /></MacroSlot>
        <ViewGroup>
          <ViewButton $active><NormalViewIcon /></ViewButton>
          <ViewButton><PageViewIcon /></ViewButton>
          <ViewButton><BreakViewIcon /></ViewButton>
          <ZoomSign $ml={4}>-</ZoomSign>
          <ZoomSlider />
          <ZoomSign>+</ZoomSign>
          <ZoomValue>100%</ZoomValue>
        </ViewGroup>
      </StatusBar>
    </Window>
  );
}
